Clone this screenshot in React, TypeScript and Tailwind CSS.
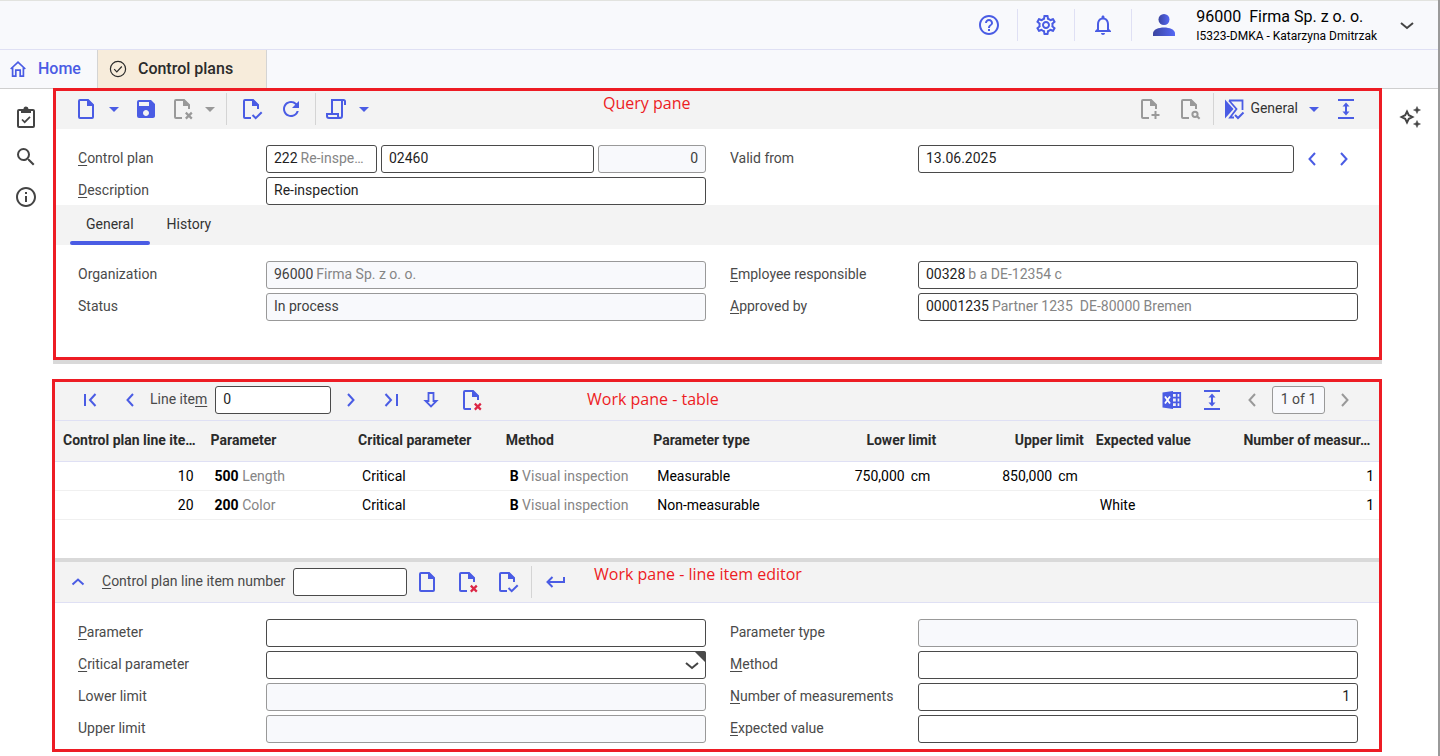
import React from "react";
import {
  MdHelpOutline,
  MdInfoOutline,
  MdNotificationsNone,
  MdOutlineSettings,
  MdRefresh,
  MdSave,
  MdSearch,
} from "react-icons/md";

type Kids = { children?: React.ReactNode };

/* ---------- icons ---------- */

function Svg({ children, size = 24 }: Kids & { size?: number }) {
  return (
    <svg width={size} height={size} viewBox="0 0 24 24" fill="none" stroke="currentColor" strokeWidth="2" aria-hidden="true" className="shrink-0">
      {children}
    </svg>
  );
}

function DocNew() {
  return (
    <Svg>
      <path d="M14 3H6a1 1 0 0 0-1 1v16a1 1 0 0 0 1 1h12a1 1 0 0 0 1-1V8z" />
      <path d="M13 2.5V9h6.5V8L14 2.5z" fill="currentColor" stroke="none" />
    </Svg>
  );
}

function DocBase({ children }: Kids) {
  return (
    <Svg>
      <g transform="translate(1 0)">
        <path d="M11 21H5a1 1 0 0 1-1-1V4a1 1 0 0 1 1-1h8l5 5v4" />
        <path d="M12 2.5V9h6.5V8L13 2.5z" fill="currentColor" stroke="none" />
        {children}
      </g>
    </Svg>
  );
}

const DocCheck = () => (
  <DocBase>
    <path d="M12.5 18l3.2 3.2 6-6" />
  </DocBase>
);
const DocDelete = ({ red = false }: { red?: boolean }) => (
  <DocBase>
    <path d="M14.8 15.6l6 6m0-6l-6 6" stroke={red ? "#dc2645" : "currentColor"} strokeWidth="2.2" />
  </DocBase>
);
const DocAdd = () => (
  <DocBase>
    <path d="M17.5 14v8M13.5 18h8" />
  </DocBase>
);
const DocFind = () => (
  <DocBase>
    <circle cx="17" cy="17.3" r="2.6" />
    <path d="M19 19.2l2.6 2.6" />
  </DocBase>
);

const Caret = () => (
  <svg width="10" height="5" viewBox="0 0 10 5" fill="currentColor" aria-hidden="true">
    <path d="M0 0h10L5 5z" />
  </svg>
);

const Left = () => <Svg><path d="M15 6l-5.500 6 5.500 6" /></Svg>;
const Right = () => <Svg><path d="M9 6l5.500 6L9 18" /></Svg>;
const Down = () => <Svg><path d="M6 10l6 5 6-5" /></Svg>;
const Up = () => <Svg><path d="M6.5 14.5L12 9.500l5.500 5" /></Svg>;
const First = () => <Svg><path d="M7 6v12M17.500 6L12 12l5.500 6" /></Svg>;
const Last = () => <Svg><path d="M6.500 6l5.500 6-5.500 6M18 6v12" /></Svg>;
const ArrowDown = () => (
  <Svg>
    <path d="M9.500 5h5v8h3L12 18.500 6.500 13h3z" strokeWidth="1.800" />
  </Svg>
);
const Enter = () => <Svg><path d="M20 7v5H4M8.500 7L3.500 12l5 5" /></Svg>;
const Expand = () => (
  <Svg>
    <path d="M4 3h16M4 21h16M12 7v10" />
    <path d="M12 5.500L8.500 9.500h7zM12 18.500l-3.500-4h7z" fill="currentColor" stroke="none" />
  </Svg>
);
const Scroll = () => (
  <Svg>
    <path d="M8 16V3h11.500a1.500 1.500 0 0 1 1.500 1.500V8M18 3.500V19a2 2 0 0 1-2 2H5a2 2 0 0 1-2-2v-2h11v2a2 2 0 0 0 2 2" />
  </Svg>
);
const Variant = () => (
  <Svg>
    <path d="M3 2.500L11.500 12 3 21.500z" fill="currentColor" stroke="none" />
    <path d="M7 3.500h13.500V13M7 3.500L14.500 12 8 20.500h4" strokeWidth="1.800" />
    <path d="M13 18l3 3 5.500-5.500" />
  </Svg>
);
const Excel = () => (
  <Svg>
    <path d="M2.500 4.500L13 3v18L2.500 19.500z" fill="currentColor" stroke="none" />
    <path d="M13 5h7.200v14H13M13 9.700h7M13 14.300h7M16.700 5v14" strokeWidth="1.800" />
    <path d="M5 8.500l5 7m0-7l-5 7" stroke="#fff" strokeWidth="1.800" />
  </Svg>
);
const House = () => (
  <svg width="16" height="16" viewBox="0 0 16 16" fill="none" stroke="currentColor" strokeWidth="1.700" aria-hidden="true">
    <path d="M.7 8L8 1.200 15.300 8" />
    <path d="M2.600 6.500V15.100h3.200V9.200h4.400v5.900h3.200V6.500" />
  </svg>
);
const CheckCircle = () => (
  <svg width="18" height="18" viewBox="0 0 18 18" fill="none" stroke="currentColor" strokeWidth="1.200" aria-hidden="true">
    <circle cx="9" cy="9" r="7.600" />
    <path d="M5.200 9.200l2.600 2.600 5-5.300" />
  </svg>
);
const Clipboard = () => (
  <svg width="18" height="22" viewBox="0 0 18 22" fill="none" stroke="currentColor" strokeWidth="2" aria-hidden="true">
    <rect x="1" y="4" width="16" height="17" rx="1" />
    <path d="M4 7V3h2.500a2.500 2.500 0 0 1 5 0H14v4z" fill="currentColor" stroke="none" />
    <path d="M5 13.500l2.700 2.700 5.300-5.300" strokeWidth="1.700" />
  </svg>
);
const Sparkles = () => (
  <svg width="22" height="22" viewBox="0 0 22 22" fill="none" stroke="currentColor" aria-hidden="true">
    <path d="M8 5.500L9.800 9.200 13.500 11 9.800 12.800 8 16.500 6.200 12.800 2.500 11 6.200 9.200z" strokeWidth="1.900" />
    <path d="M18 .5l1 2.500 2.500 1-2.500 1L18 7.500 17 5l-2.500-1L17 3zM18 14.500l1 2.500 2.500 1-2.500 1-1 2.500-1-2.500-2.500-1 2.500-1z" fill="currentColor" strokeWidth=".5" />
  </svg>
);
const Person = () => (
  <svg width="22" height="22" viewBox="0 0 22 22" aria-hidden="true">
    <defs>
      <linearGradient id="person" x1="0" x2="1">
        <stop offset="0" stopColor="#3b45a0" />
        <stop offset="1" stopColor="#5568f5" />
      </linearGradient>
    </defs>
    <circle cx="11" cy="5.500" r="5.500" fill="url(#person)" />
    <path d="M0 22v-2.500C0 15.500 5.500 13.500 11 13.500s11 2 11 6V22z" fill="url(#person)" />
  </svg>
);

/* ---------- controls ---------- */

function Tool({ label, children, narrow, muted }: Kids & { label: string; narrow?: boolean; muted?: boolean }) {
  return (
    <button
      type="button"
      aria-label={label}
      disabled={muted}
      className={`flex h-8 shrink-0 items-center justify-center ${narrow ? "w-4" : "w-10"} ${muted ? "text-[#999999]" : "text-[#4a5ce4]"}`}
    >
      {children}
    </button>
  );
}

const Separator = () => <span className="mx-1 block h-8 w-px shrink-0 bg-[#d4d4d4]" />;

const box = "h-7 w-full min-w-0 rounded-[3px] border px-[7px] pb-0.5 text-sm";
const open = "border-[#4a4a4a] bg-white text-[#1f1f1f]";
const locked = "border-[#999999] bg-[#f8f9fc] text-[#3f3f3f]";

function TextBox({ id, value = "", disabled, right, label }: { id?: string; value?: string; disabled?: boolean; right?: boolean; label?: string }) {
  return (
    <input
      id={id}
      aria-label={label}
      type="text"
      defaultValue={value}
      disabled={disabled}
      className={`${box} ${disabled ? locked : open} ${right ? "text-right" : ""}`}
    />
  );
}

/* A key field followed by the name it resolves to. */
function KeyBox({ id, value, name, disabled }: { id: string; value: string; name: string; disabled?: boolean }) {
  return (
    <div className={`${box} flex items-center gap-[3px] ${disabled ? locked : open}`}>
      <input
        id={id}
        type="text"
        defaultValue={value}
        disabled={disabled}
        style={{ width: `${value.length}ch` }}
        className="shrink-0 bg-transparent outline-none"
      />
      <span className="whitespace-pre text-[#858585]">{name}</span>
    </div>
  );
}

function Caption({ text, hot }: { text: string; hot?: number }) {
  if (hot === undefined) return <>{text}</>;
  return (
    <>
      {text.slice(0, hot)}
      <span className="underline underline-offset-2">{text[hot]}</span>
      {text.slice(hot + 1)}
    </>
  );
}

function Field({ id, text, hot, children }: Kids & { id: string; text: string; hot?: number }) {
  return (
    <div className="flex h-7 items-center">
      <label htmlFor={id} className="w-[188px] shrink-0 pb-0.5 text-sm text-[#4a4a4a]">
        <Caption text={text} hot={hot} />
      </label>
      <div className="flex min-w-0 flex-1 items-center">{children}</div>
    </div>
  );
}

const Note = ({ children, place }: Kids & { place: string }) => (
  <p className={`pointer-events-none absolute font-['Open_Sans','Noto_Sans',sans-serif] text-base leading-6 text-[#ed1c24] ${place}`}>{children}</p>
);

/* ---------- page parts ---------- */

function Header() {
  const item = "flex h-8 w-[57px] items-center justify-center border-r border-[#dfe0f4] text-[#4a5ce4]";
  return (
    <header className="flex h-[50px] items-center justify-end border-t border-b border-t-[#e2e3df] border-b-[#dfe0f4] bg-[#f8f9fc]">
      <button type="button" aria-label="Help" className={item}><MdHelpOutline size={24} /></button>
      <button type="button" aria-label="Settings" className={item}><MdOutlineSettings size={24} /></button>
      <button type="button" aria-label="Notifications" className={item}><MdNotificationsNone size={24} /></button>
      <button type="button" className="ml-[21px] mr-[19px] flex items-center text-left">
        <Person />
        <span className="ml-[21px] mr-[18px] block pt-0.5 whitespace-pre text-black">
          <span className="block text-base leading-5">96000  Firma Sp. z o. o.</span>
          <span className="block text-xs leading-[18px]">I5323-DMKA - Katarzyna Dmitrzak</span>
        </span>
        <span className="text-[#444]"><Down /></span>
      </button>
    </header>
  );
}

function AppTabs() {
  return (
    <nav className="flex h-[39px] border-b border-[#cfcfcf] bg-[#f8f9fc] text-base font-medium">
      <a href="#home" className="flex items-center border-r border-[#d4d4d4] pr-4 pl-[10px] text-[#4a5ce4]">
        <House />
        <span className="ml-3">Home</span>
      </a>
      <a href="#control-plans" className="flex items-center border-r border-[#d4d4d4] bg-[#f7ecdb] pr-[33px] pl-[11px] text-[#2b2b2b]">
        <CheckCircle />
        <span className="ml-[11px]">Control plans</span>
      </a>
    </nav>
  );
}

function QueryPane() {
  return (
    <section className="relative -mt-px border-[3px] border-[#ed1c24] bg-white">
      <Note place="top-0 left-[547px]">Query pane</Note>
      <div className="flex h-[38px] items-center justify-between bg-[#f3f3f3] pr-[13px] pb-0.5 pl-[10px]">
        <div className="flex items-center">
          <Tool label="New"><DocNew /></Tool>
          <Tool label="New options" narrow><Caret /></Tool>
          <span className="w-1" />
          <Tool label="Save"><MdSave size={24} /></Tool>
          <div className="-ml-1 flex">
            <Tool label="Delete" muted><DocDelete /></Tool>
            <Tool label="Delete options" narrow muted><Caret /></Tool>
          </div>
          <span className="w-1" />
          <Separator />
          <Tool label="Validate"><DocCheck /></Tool>
          <Tool label="Refresh"><MdRefresh size={24} /></Tool>
          <div className="-mr-1"><Separator /></div>
          <Tool label="Output"><Scroll /></Tool>
          <Tool label="Output options" narrow><Caret /></Tool>
        </div>
        <div className="flex items-center">
          <Tool label="Add attachment" muted><DocAdd /></Tool>
          <Tool label="Find document" muted><DocFind /></Tool>
          <Separator />
          <button type="button" className="flex h-8 items-center pr-[7px] pl-1 text-sm text-[#333]">
            <span className="text-[#4a5ce4]"><Variant /></span>
            <span className="mr-[11px] ml-1 pb-0.5">General</span>
            <span className="text-[#4a5ce4]"><Caret /></span>
          </button>
          <Tool label="Fit height"><Expand /></Tool>
        </div>
      </div>
      <div className="grid grid-cols-2 gap-x-6 gap-y-1 pt-4 pr-[21px] pl-[22px]">
        <Field id="control-plan" text="Control plan" hot={0}>
          <div className="flex w-full gap-1">
            <div className="w-[111px] shrink-0">
              <KeyBox id="control-plan" value="222" name="Re-inspe…" />
            </div>
            <TextBox label="Control plan number" value="02460" />
            <div className="w-[108px] shrink-0">
              <TextBox label="Control plan version" value="0" disabled right />
            </div>
          </div>
        </Field>
        <Field id="valid-from" text="Valid from">
          <TextBox id="valid-from" value="13.06.2025" />
          <button type="button" aria-label="Previous date" className="flex w-8 shrink-0 justify-end pr-0.5 text-[#4a5ce4]"><Left /></button>
          <button type="button" aria-label="Next date" className="flex w-8 shrink-0 justify-end pr-0.5 text-[#4a5ce4]"><Right /></button>
        </Field>
        <Field id="description" text="Description" hot={0}>
          <TextBox id="description" value="Re-inspection" />
        </Field>
      </div>
      <div role="tablist" className="flex h-10 gap-px bg-[#f3f3f3] pl-[14px] text-sm text-[#333]">
        <button type="button" role="tab" aria-selected="true" className="relative px-4 pb-0.5">
          General
          <span className="absolute inset-x-0 bottom-0 h-1 rounded-xs bg-[#4a5ce4]" />
        </button>
        <button type="button" role="tab" aria-selected="false" className="px-4 pb-0.5">History</button>
      </div>
      <div className="grid grid-cols-2 gap-x-6 gap-y-1 pt-4 pr-[21px] pb-9 pl-[22px]">
        <Field id="organization" text="Organization">
          <KeyBox id="organization" value="96000" name="Firma Sp. z o. o." disabled />
        </Field>
        <Field id="employee" text="Employee responsible" hot={0}>
          <KeyBox id="employee" value="00328" name="b a DE-12354 c" />
        </Field>
        <Field id="status" text="Status">
          <TextBox id="status" value="In process" disabled />
        </Field>
        <Field id="approved" text="Approved by" hot={0}>
          <KeyBox id="approved" value="00001235" name="Partner 1235  DE-80000 Bremen" />
        </Field>
      </div>
    </section>
  );
}

const columns = [
  { title: "Control plan line ite…" },
  { title: "Parameter" },
  { title: "Critical parameter" },
  { title: "Method" },
  { title: "Parameter type" },
  { title: "Lower limit", right: true },
  { title: "Upper limit", right: true },
  { title: "Expected value" },
  { title: "Number of measur…" },
];

const rows = [
  { no: 10, key: "500", name: "Length", type: "Measurable", low: "750,000", high: "850,000", expected: "", count: 1 },
  { no: 20, key: "200", name: "Color", type: "Non-measurable", low: "", high: "", expected: "White", count: 1 },
];

const Limit = ({ value }: { value: string }) => (
  <td className="pr-2.5 text-right">
    {value}
    {value && <span className="ml-1.5">cm</span>}
  </td>
);

const Keyed = ({ value, name }: { value: string; name: string }) => (
  <td className="pl-3">
    <b className="font-bold">{value}</b> <span className="text-[#858585]">{name}</span>
  </td>
);

function ItemTable() {
  return (
    <div className="min-h-[137px] overflow-hidden">
      <table className="w-[calc(100%+4px)] table-fixed border-collapse text-sm text-black">
        <thead>
          <tr className="h-10 border-b border-[#dfe0f4] bg-[#f3f3f3] text-[#2b2b2b]">
            {columns.map((c) => (
              <th key={c.title} scope="col" className={`pr-1 pb-px pl-2 font-bold whitespace-nowrap ${c.right ? "text-right" : "text-left"}`}>
                {c.title}
              </th>
            ))}
          </tr>
        </thead>
        <tbody>
          {rows.map((r) => (
            <tr key={r.no} className="h-[29px] border-b border-[#f0f0f0]">
              <td className="pr-[9px] text-right">{r.no}</td>
              <Keyed value={r.key} name={r.name} />
              <td className="pl-3">Critical</td>
              <Keyed value="B" name="Visual inspection" />
              <td className="pl-3">{r.type}</td>
              <Limit value={r.low} />
              <Limit value={r.high} />
              <td className="pl-3">{r.expected}</td>
              <td className="pr-[9px] text-right">{r.count}</td>
            </tr>
          ))}
        </tbody>
      </table>
    </div>
  );
}

function WorkPane() {
  return (
    <section className="-ml-px border-[3px] border-[#ed1c24] bg-white">
      <div className="relative flex h-[39px] items-center justify-between border-b border-[#dfe0f4] bg-[#f3f3f3] pr-[14px] pb-0.5 pl-[15px]">
        <Note place="top-[5px] left-[532px]">Work pane - table</Note>
        <div className="flex items-center">
          <Tool label="First line item"><First /></Tool>
          <Tool label="Previous line item"><Left /></Tool>
          <label htmlFor="line-item" className="mr-2 pb-0.5 text-sm text-[#4a4a4a]"><Caption text="Line item" hot={8} /></label>
          <div className="w-[116px]"><TextBox id="line-item" value="0" /></div>
          <Tool label="Next line item"><Right /></Tool>
          <Tool label="Last line item"><Last /></Tool>
          <Tool label="Go to line item"><ArrowDown /></Tool>
          <Tool label="Delete line item"><DocDelete red /></Tool>
        </div>
        <div className="flex items-center">
          <Tool label="Export to Excel"><Excel /></Tool>
          <Tool label="Fit height"><Expand /></Tool>
          <Tool label="Previous page" muted><Left /></Tool>
          <output className="flex h-7 w-[53px] items-center justify-center rounded-[3px] border border-[#999999] bg-[#f8f9fc] pb-0.5 text-sm text-[#4a4a4a]">1 of 1</output>
          <Tool label="Next page" muted><Right /></Tool>
        </div>
      </div>
      <ItemTable />
      <div className="relative flex h-[45px] items-center border-t-4 border-b border-t-[#d9d9d9] border-b-[#dfe0f4] bg-[#f3f3f3] pl-[3px]">
        <Note place="top-0 left-[539px]">Work pane - line item editor</Note>
        <Tool label="Collapse"><Up /></Tool>
        <label htmlFor="item-number" className="mr-2 ml-1 pb-0.5 text-sm text-[#4a4a4a]"><Caption text="Control plan line item number" hot={0} /></label>
        <div className="w-[114px]"><TextBox id="item-number" /></div>
        <Tool label="New line item"><DocNew /></Tool>
        <Tool label="Delete line item"><DocDelete red /></Tool>
        <Tool label="Validate line item"><DocCheck /></Tool>
        <Separator />
        <Tool label="Accept"><Enter /></Tool>
      </div>
      <div className="grid grid-cols-2 gap-x-6 gap-y-1 pt-4 pr-[21px] pb-1.5 pl-[23px]">
        <Field id="parameter" text="Parameter" hot={0}><TextBox id="parameter" /></Field>
        <Field id="parameter-type" text="Parameter type"><TextBox id="parameter-type" disabled /></Field>
        <Field id="critical" text="Critical parameter" hot={0}>
          <div className="relative w-full">
            <select id="critical" className={`${box} ${open} block appearance-none`}>
              <option value=""></option>
            </select>
            <span className="pointer-events-none absolute top-0.5 right-[2px] text-[#444]"><Down /></span>
            <svg width="12" height="12" viewBox="0 0 12 12" aria-hidden="true" className="pointer-events-none absolute top-0 right-0">
              <path d="M0 0h10a2 2 0 0 1 2 2v10z" fill="#4a4a4a" />
            </svg>
          </div>
        </Field>
        <Field id="method" text="Method" hot={0}><TextBox id="method" /></Field>
        <Field id="lower" text="Lower limit"><TextBox id="lower" disabled /></Field>
        <Field id="measurements" text="Number of measurements" hot={0}><TextBox id="measurements" value="1" right /></Field>
        <Field id="upper" text="Upper limit"><TextBox id="upper" disabled /></Field>
        <Field id="expected" text="Expected value" hot={0}><TextBox id="expected" /></Field>
      </div>
    </section>
  );
}

export default function App() {
  const rail = "flex h-10 w-full items-center justify-center";
  return (
    <div className="flex min-h-screen flex-col border-r-2 border-[#9a9a9a] bg-white font-['Roboto','Liberation_Sans',sans-serif]">
      <Header />
      <AppTabs />
      <div className="flex flex-1">
        <aside className="w-[53px] shrink-0 pt-2 pr-px text-[#444]">
          <button type="button" aria-label="Tasks" className={rail}><Clipboard /></button>
          <button type="button" aria-label="Search" className={rail}><MdSearch size={24} /></button>
          <button type="button" aria-label="Information" className={rail}><MdInfoOutline size={24} /></button>
        </aside>
        <main className="min-w-0 flex-1">
          <QueryPane />
          <div className="mb-[15px] h-1 bg-[#d9d9d9]" />
          <WorkPane />
        </main>
        <aside className="w-14 shrink-0 pt-2 text-[#444]">
          <button type="button" aria-label="Assistant" className={rail}><Sparkles /></button>
        </aside>
      </div>
    </div>
  );
}
